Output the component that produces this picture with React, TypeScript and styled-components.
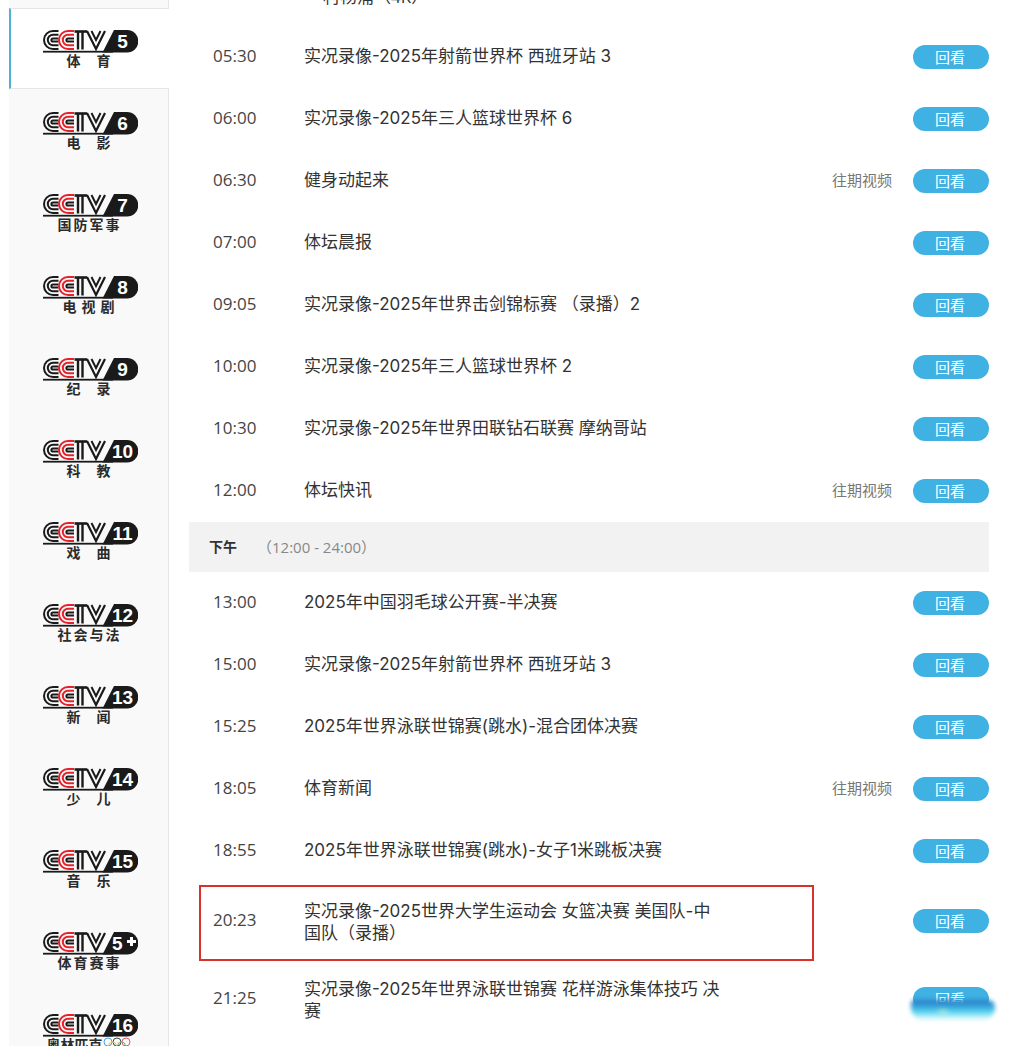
import React from "react"
import styled, { createGlobalStyle } from "styled-components"

const GlobalStyle = createGlobalStyle`
  html, body {
    margin: 0;
    height: 1046px;
    overflow: hidden;
    background: #fff;
    font-family: "Open Sans", "Noto Sans CJK SC", sans-serif;
  }
  * {
    box-sizing: border-box;
  }
`

const Page = styled.div`
  display: flex;
  align-items: flex-start;
  width: 1036px;
  height: 1046px;
  overflow: hidden;
  padding-left: 9px;
`
const Sidebar = styled.aside`
  flex: 0 0 160px;
  padding-top: 8px;
  background: #f9f9f9;
  border-right: 1px solid #e6e6e6;
`
const Channel = styled.div<{ $active?: boolean }>`
  height: 82px;
  padding-top: 23px;
  display: flex;
  flex-direction: column;
  align-items: center;
  ${p =>
    p.$active &&
    `
    height: 81px;
    margin-right: -1px;
    padding-top: 21px;
    padding-right: 3px;
    background: #fff;
    border-top: 1px solid #e6e6e6;
    border-bottom: 1px solid #e6e6e6;
    border-left: 2px solid #4fb2d2;
  `}
`
const LogoMark = styled.svg`
  display: block;
  flex: none;
  margin-left: 3px;
`
const ChannelLabel = styled.div<{ $gap: number }>`
  display: flex;
  align-items: center;
  gap: ${p => p.$gap}px;
  height: 16px;
  margin-top: -1px;
  font-family: "Noto Sans CJK SC", sans-serif;
  font-size: 14px;
  line-height: 16px;
  font-weight: 700;
  color: #2b2b2b;
  white-space: nowrap;
`
const Rings = styled.svg`
  flex: none;
`
const Main = styled.main`
  flex: 0 0 800px;
  margin-left: 20px;
`
const CutRow = styled.div`
  margin-top: -14px;
  padding: 0 0 17px 134px;
  font-size: 17px;
  line-height: 22px;
  color: #333;
`
const Row = styled.div`
  position: relative;
  display: flex;
  align-items: center;
  min-height: 62px;
  padding: 15px 0;
`
const Time = styled.div`
  flex: 0 0 115px;
  padding-left: 24px;
  font-size: 17px;
  line-height: 22px;
  color: #444;
`
const Title = styled.div<{ $wrapped?: boolean }>`
  width: 419px;
  padding-top: ${p => (p.$wrapped ? 4 : 0)}px;
  font-family: Inter, "Noto Sans CJK SC", sans-serif;
  font-size: 17px;
  line-height: 22px;
  color: #333;
`
const Actions = styled.div`
  display: flex;
  align-items: center;
  margin-left: auto;
`
const Past = styled.span`
  margin-right: 21px;
  font-size: 15px;
  line-height: 22px;
  color: #777;
`
const Replay = styled.span`
  position: relative;
  display: flex;
  align-items: center;
  justify-content: center;
  width: 76px;
  height: 24px;
  margin-top: 2px;
  padding: 1px 2px 0 0;
  border-radius: 12px;
  background: #3fb1e3;
  font-size: 15px;
  line-height: 23px;
  color: #fff;
`
const Smudge = styled.span`
  position: absolute;
  left: -2px;
  top: 13px;
  width: 84px;
  height: 21px;
  border-radius: 4px 8px 16px 16px;
  background:
    radial-gradient(ellipse 8px 3px at 32px 11px, #b8f0c8 0%, transparent 100%),
    linear-gradient(#2a78bd 0%, #339fda 28%, #55d2f0 55%, #bdf1fa 80%, #fff 100%);
  filter: blur(2px);
`
const Highlight = styled.div`
  position: absolute;
  left: 10px;
  top: 4px;
  width: 615px;
  height: 76px;
  border: 2px solid #d8322a;
  pointer-events: none;
`
const Section = styled.div`
  display: flex;
  align-items: center;
  height: 50px;
  margin: 1px 0 -1px;
  padding: 0 0 2px 20px;
  background: #f2f2f2;
`
const SectionName = styled.strong`
  width: 48px;
  font-size: 14px;
  font-weight: 700;
  color: #333;
`
const SectionRange = styled.span`
  font-size: 15px;
  color: #888;
`

type Program = { time: string; title: string; past?: boolean; wrapped?: boolean }

const morning: Program[] = [
  { time: "05:30", title: "实况录像-2025年射箭世界杯 西班牙站 3" },
  { time: "06:00", title: "实况录像-2025年三人篮球世界杯 6" },
  { time: "06:30", title: "健身动起来", past: true },
  { time: "07:00", title: "体坛晨报" },
  { time: "09:05", title: "实况录像-2025年世界击剑锦标赛 （录播）2" },
  { time: "10:00", title: "实况录像-2025年三人篮球世界杯 2" },
  { time: "10:30", title: "实况录像-2025年世界田联钻石联赛 摩纳哥站" },
  { time: "12:00", title: "体坛快讯", past: true },
]

const afternoon: Program[] = [
  { time: "13:00", title: "2025年中国羽毛球公开赛-半决赛" },
  { time: "15:00", title: "实况录像-2025年射箭世界杯 西班牙站 3" },
  { time: "15:25", title: "2025年世界泳联世锦赛(跳水)-混合团体决赛" },
  { time: "18:05", title: "体育新闻", past: true },
  { time: "18:55", title: "2025年世界泳联世锦赛(跳水)-女子1米跳板决赛" },
]

const channels = [
  { num: "5", label: "体育" },
  { num: "6", label: "电影" },
  { num: "7", label: "国防军事" },
  { num: "8", label: "电视剧" },
  { num: "9", label: "纪录" },
  { num: "10", label: "科教" },
  { num: "11", label: "戏曲" },
  { num: "12", label: "社会与法" },
  { num: "13", label: "新闻" },
  { num: "14", label: "少儿" },
  { num: "15", label: "音乐" },
  { num: "5+", label: "体育赛事" },
  { num: "16", label: "奥林匹克" },
]

const labelGap: Record<number, number> = { 2: 16, 3: 5, 4: 2 }

const cShape = (cx: number, r: number, end: number) =>
  `M${end} ${10 - r}H${cx}A${r} ${r} 0 0 0 ${cx} ${10 + r}H${end}`

const Logo = ({ num }: { num: string }) => (
  <LogoMark width="95" height="23" viewBox="0 0 95 23">
    <g fill="none" strokeWidth="2">
      <g stroke="#1a1a1a">
        <path d={cShape(10, 9, 15.5)} />
        <path d={cShape(10, 5.2, 15.5)} />
        <path d={cShape(10, 1.6, 15.5)} />
      </g>
      <g stroke="#e5222b">
        <path d={cShape(25, 9, 31)} />
        <path d={cShape(25, 5.2, 31)} />
      </g>
      <path d={cShape(25, 1.6, 31)} stroke="#1a1a1a" />
      <g stroke="#1a1a1a">
        <path d="M31.5 1.5H44" strokeWidth="2.6" />
        <path d="M35 2V19.5M39.5 2V19.5" strokeWidth="2.4" />
        <path d="M44 1L53 19L62 1" strokeWidth="2.2" />
        <path d="M48.5 1L53 10L57.5 1" />
      </g>
    </g>
    <rect x="0" y="20.8" width="70" height="1.8" fill="#1a1a1a" />
    <path d="M71 0H84A11 11 0 0 1 84 22.6H59.5Z" fill="#1a1a1a" />
    <text
      x={num === "5+" ? 69 : 79.5}
      y={num === "5+" ? 18 : 17.5}
      textAnchor={num === "5+" ? "start" : "middle"}
      fontFamily='"Liberation Sans", sans-serif'
      fontWeight="700"
      fontSize="19"
      fill="#fff"
    >
      {num === "5+" ? "5" : num}
    </text>
    {num === "5+" && <path d="M88.5 5V14M84 9.5H93" stroke="#fff" strokeWidth="3" />}
  </LogoMark>
)

const OlympicRings = () => (
  <Rings width="28" height="14" viewBox="0 0 28 14">
    <g fill="none" strokeWidth="1">
      <circle cx="5" cy="5" r="4" stroke="#4aa3df" />
      <circle cx="14" cy="5" r="4" stroke="#444" />
      <circle cx="23" cy="5" r="4" stroke="#e25b6a" />
      <circle cx="9.5" cy="9" r="4" stroke="#e8c65a" />
      <circle cx="18.5" cy="9" r="4" stroke="#63b77a" />
    </g>
  </Rings>
)

const ProgramRow = ({ program, children }: { program: Program; children?: React.ReactNode }) => (
  <Row>
    <Time>{program.time}</Time>
    <Title $wrapped={program.wrapped}>{program.title}</Title>
    <Actions>
      {program.past && <Past>往期视频</Past>}
      <Replay>回看{children}</Replay>
    </Actions>
  </Row>
)

const App: React.FC = () => {
  return (
    <Page>
      <GlobalStyle />
      <Sidebar>
        {channels.map((c, i) => (
          <Channel key={c.num} $active={i === 0}>
            <Logo num={c.num} />
            <ChannelLabel $gap={c.num === "16" ? 0 : labelGap[c.label.length]}>
              {c.label.split("").map((ch, j) => (
                <span key={j}>{ch}</span>
              ))}
              {c.num === "16" && <OlympicRings />}
            </ChannelLabel>
          </Channel>
        ))}
      </Sidebar>
      <Main>
        <CutRow>村杨浦（4K）</CutRow>
        {morning.map(p => (
          <ProgramRow key={p.time} program={p} />
        ))}
        <Section>
          <SectionName>下午</SectionName>
          <SectionRange>（12:00 - 24:00）</SectionRange>
        </Section>
        {afternoon.map(p => (
          <ProgramRow key={p.time} program={p} />
        ))}
        <Row>
          <Highlight />
          <Time>20:23</Time>
          <Title $wrapped>实况录像-2025世界大学生运动会 女篮决赛 美国队-中国队（录播）</Title>
          <Actions>
            <Replay>回看</Replay>
          </Actions>
        </Row>
        <ProgramRow
          program={{
            time: "21:25",
            title: "实况录像-2025年世界泳联世锦赛 花样游泳集体技巧 决赛",
            wrapped: true,
          }}
        >
          <Smudge />
        </ProgramRow>
      </Main>
    </Page>
  )
}

export default App
